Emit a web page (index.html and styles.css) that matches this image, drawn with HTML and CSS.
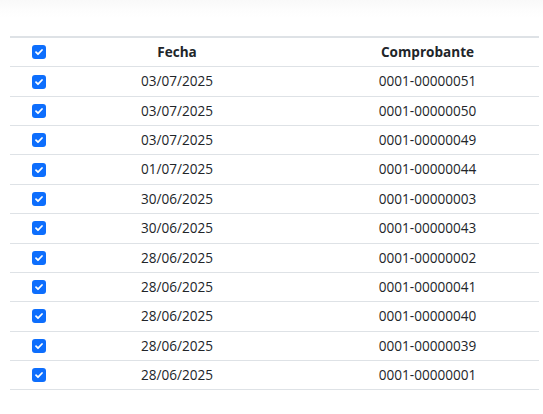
FILE: index.html
```html
<!DOCTYPE html>
<html lang="es">
<head>
<meta charset="utf-8">
<link rel="stylesheet" href="styles.css">
</head>
<body>
<div class="topshade"></div>
<div class="table">
  <div class="row head">
    <div class="cell chk"><span class="box"><svg viewBox="0 0 14 14"><path d="M4 7.2l2 2 4-4.2" fill="none" stroke="#fff" stroke-width="1.8" stroke-linecap="round" stroke-linejoin="round"/></svg></span></div>
    <div class="cell">Fecha</div>
    <div class="cell c3">Comprobante</div>
  </div>
  <div class="row"><div class="cell chk"><span class="box"><svg viewBox="0 0 14 14"><path d="M4 7.2l2 2 4-4.2" fill="none" stroke="#fff" stroke-width="1.8" stroke-linecap="round" stroke-linejoin="round"/></svg></span></div><div class="cell">03/07/2025</div><div class="cell c3">0001-00000051</div></div>
  <div class="row"><div class="cell chk"><span class="box"><svg viewBox="0 0 14 14"><path d="M4 7.2l2 2 4-4.2" fill="none" stroke="#fff" stroke-width="1.8" stroke-linecap="round" stroke-linejoin="round"/></svg></span></div><div class="cell">03/07/2025</div><div class="cell c3">0001-00000050</div></div>
  <div class="row"><div class="cell chk"><span class="box"><svg viewBox="0 0 14 14"><path d="M4 7.2l2 2 4-4.2" fill="none" stroke="#fff" stroke-width="1.8" stroke-linecap="round" stroke-linejoin="round"/></svg></span></div><div class="cell">03/07/2025</div><div class="cell c3">0001-00000049</div></div>
  <div class="row"><div class="cell chk"><span class="box"><svg viewBox="0 0 14 14"><path d="M4 7.2l2 2 4-4.2" fill="none" stroke="#fff" stroke-width="1.8" stroke-linecap="round" stroke-linejoin="round"/></svg></span></div><div class="cell">01/07/2025</div><div class="cell c3">0001-00000044</div></div>
  <div class="row"><div class="cell chk"><span class="box"><svg viewBox="0 0 14 14"><path d="M4 7.2l2 2 4-4.2" fill="none" stroke="#fff" stroke-width="1.8" stroke-linecap="round" stroke-linejoin="round"/></svg></span></div><div class="cell">30/06/2025</div><div class="cell c3">0001-00000003</div></div>
  <div class="row"><div class="cell chk"><span class="box"><svg viewBox="0 0 14 14"><path d="M4 7.2l2 2 4-4.2" fill="none" stroke="#fff" stroke-width="1.8" stroke-linecap="round" stroke-linejoin="round"/></svg></span></div><div class="cell">30/06/2025</div><div class="cell c3">0001-00000043</div></div>
  <div class="row"><div class="cell chk"><span class="box"><svg viewBox="0 0 14 14"><path d="M4 7.2l2 2 4-4.2" fill="none" stroke="#fff" stroke-width="1.8" stroke-linecap="round" stroke-linejoin="round"/></svg></span></div><div class="cell">28/06/2025</div><div class="cell c3">0001-00000002</div></div>
  <div class="row"><div class="cell chk"><span class="box"><svg viewBox="0 0 14 14"><path d="M4 7.2l2 2 4-4.2" fill="none" stroke="#fff" stroke-width="1.8" stroke-linecap="round" stroke-linejoin="round"/></svg></span></div><div class="cell">28/06/2025</div><div class="cell c3">0001-00000041</div></div>
  <div class="row"><div class="cell chk"><span class="box"><svg viewBox="0 0 14 14"><path d="M4 7.2l2 2 4-4.2" fill="none" stroke="#fff" stroke-width="1.8" stroke-linecap="round" stroke-linejoin="round"/></svg></span></div><div class="cell">28/06/2025</div><div class="cell c3">0001-00000040</div></div>
  <div class="row"><div class="cell chk"><span class="box"><svg viewBox="0 0 14 14"><path d="M4 7.2l2 2 4-4.2" fill="none" stroke="#fff" stroke-width="1.8" stroke-linecap="round" stroke-linejoin="round"/></svg></span></div><div class="cell">28/06/2025</div><div class="cell c3">0001-00000039</div></div>
  <div class="row"><div class="cell chk"><span class="box"><svg viewBox="0 0 14 14"><path d="M4 7.2l2 2 4-4.2" fill="none" stroke="#fff" stroke-width="1.8" stroke-linecap="round" stroke-linejoin="round"/></svg></span></div><div class="cell">28/06/2025</div><div class="cell c3">0001-00000001</div></div>
</div>
</body>
</html>
```
FILE: styles.css
```css
html, body {
  margin: 0;
  padding: 0;
  background: #fff;
}
body {
  font-family: "Open Sans", "Noto Sans", sans-serif;
  color: #212529;
  font-size: 13.57px;
  line-height: 1.5;
}
.topshade {
  height: 36px;
  background: linear-gradient(to bottom, #f9f9f9 0px, #fdfdfd 10px, #ffffff 18px);
}
.table {
  margin: 0 4px 0 10px;
  border-top: 2px solid #dee2e6;
}
.row {
  display: grid;
  grid-template-columns: 58px 218px 1fr;
  border-bottom: 1px solid #dee2e6;
  height: 28.36px;
  align-items: center;
}
.cell {
  text-align: center;
  white-space: nowrap;
}
.c3 {
  padding-left: 30px;
}
.head .cell {
  font-weight: 700;
}
.chk {
  display: flex;
  justify-content: center;
  align-items: center;
}
.box {
  width: 14px;
  height: 14px;
  border-radius: 3px;
  background: #0d6efd;
  display: block;
}
.box svg {
  width: 14px;
  height: 14px;
  display: block;
}
```
